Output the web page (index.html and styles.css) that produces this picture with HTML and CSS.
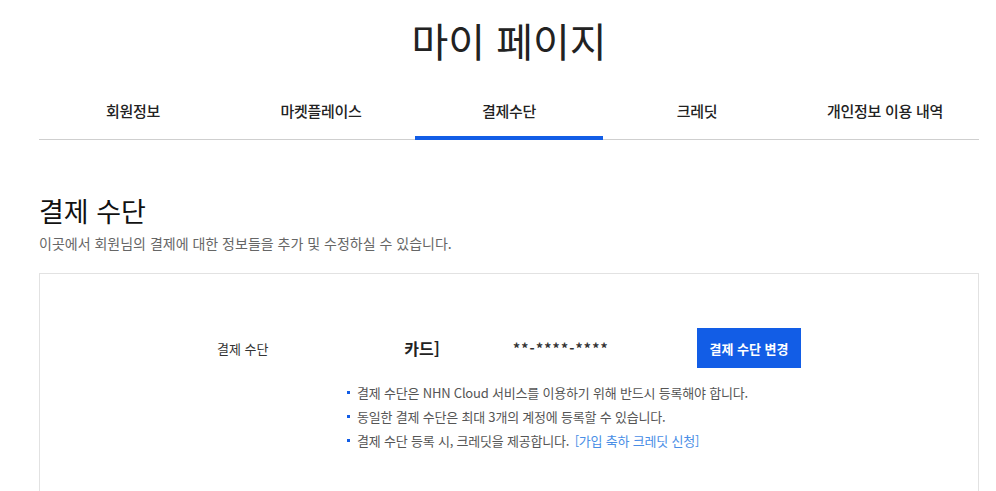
FILE: index.html
```html
<!DOCTYPE html>
<html lang="ko">
<head>
    <meta charset="UTF-8">
    <meta name="viewport" content="width=device-width, initial-scale=1.0">
    <title>마이 페이지</title>
    <link rel="stylesheet" href="styles.css">
</head>
<body>

<div class="page">
    <h1 class="page-title">마이 페이지</h1>

    <!-- Tabs -->
    <nav class="tabs">
        <a href="#">회원정보</a>
        <a href="#">마켓플레이스</a>
        <a href="#" class="active">결제수단</a>
        <a href="#">크레딧</a>
        <a href="#">개인정보 이용 내역</a>
    </nav>

    <!-- Payment section -->
    <h2 class="section-title">결제 수단</h2>
    <p class="section-desc">이곳에서 회원님의 결제에 대한 정보들을 추가 및 수정하실 수 있습니다.</p>

    <div class="pay-box">
        <div class="pay-inner">
            <div class="pay-row">
                <span class="pay-label">결제 수단</span>
                <span class="pay-type">카드]</span>
                <span class="pay-number">**-****-****</span>
                <button class="btn-change">결제 수단 변경</button>
            </div>
            <ul class="pay-notes">
                <li>결제 수단은 NHN Cloud 서비스를 이용하기 위해 반드시 등록해야 합니다.</li>
                <li>동일한 결제 수단은 최대 3개의 계정에 등록할 수 있습니다.</li>
                <li>결제 수단 등록 시, 크레딧을 제공합니다. <a href="#">[가입 축하 크레딧 신청]</a></li>
            </ul>
        </div>
    </div>
</div>

</body>
</html>
```

FILE: styles.css
```css
body {
    font-family: "Noto Sans CJK KR", "Noto Sans", sans-serif;
    margin: 0;
    padding: 0;
    background-color: #fff;
    color: #222;
}
.page {
    width: 940px;
    padding-left: 39px;
}
.page-title {
    margin: 0;
    padding-top: 16px;
    font-size: 40px;
    line-height: 48px;
    font-weight: 400;
    text-align: center;
    color: #222;
}
.tabs {
    display: flex;
    margin-top: 35px;
    border-bottom: 1px solid #cfcfcf;
}
.tabs a {
    flex: 1;
    text-align: center;
    font-size: 15px;
    line-height: 24px;
    font-weight: 500;
    letter-spacing: -0.3px;
    color: #222;
    text-decoration: none;
    padding-bottom: 13px;
    border-bottom: 4px solid transparent;
    margin-bottom: -1px;
}
.tabs a.active {
    border-bottom-color: #125de6;
}
.section-title {
    margin: 53px 0 0;
    font-size: 27px;
    line-height: 36px;
    font-weight: 400;
    color: #111;
}
.section-desc {
    margin: 4px 0 0;
    font-size: 14px;
    line-height: 20px;
    color: #666;
}
.pay-box {
    margin-top: 20px;
    border: 1px solid #e2e2e2;
    padding: 54px 0 40px;
}
.pay-inner {
    width: 584px;
    margin: 0 auto;
}
.pay-row {
    display: flex;
    align-items: center;
    height: 40px;
}
.pay-label {
    width: 130px;
    font-size: 13px;
    color: #333;
}
.pay-type {
    width: 150px;
    text-align: center;
    font-size: 16px;
    font-weight: 700;
    color: #222;
}
.pay-number {
    width: 184px;
    padding-left: 16px;
    font-size: 14px;
    font-weight: 700;
    letter-spacing: 1.2px;
    color: #333;
}
.btn-change {
    width: 104px;
    height: 40px;
    border: none;
    background-color: #125de6;
    color: #fff;
    font-family: inherit;
    font-size: 13px;
    font-weight: 700;
    cursor: pointer;
}
.pay-notes {
    list-style: none;
    margin: 13px 0 0;
    padding-left: 130px;
}
.pay-notes li {
    position: relative;
    padding-left: 10px;
    font-size: 13px;
    line-height: 24px;
    letter-spacing: -0.2px;
    color: #555;
}
.pay-notes li::before {
    content: "";
    position: absolute;
    left: 0;
    top: 10px;
    width: 3px;
    height: 3px;
    background-color: #125de6;
}
.pay-notes a {
    color: #4a8ee6;
    text-decoration: none;
    margin-left: 2px;
}
```
